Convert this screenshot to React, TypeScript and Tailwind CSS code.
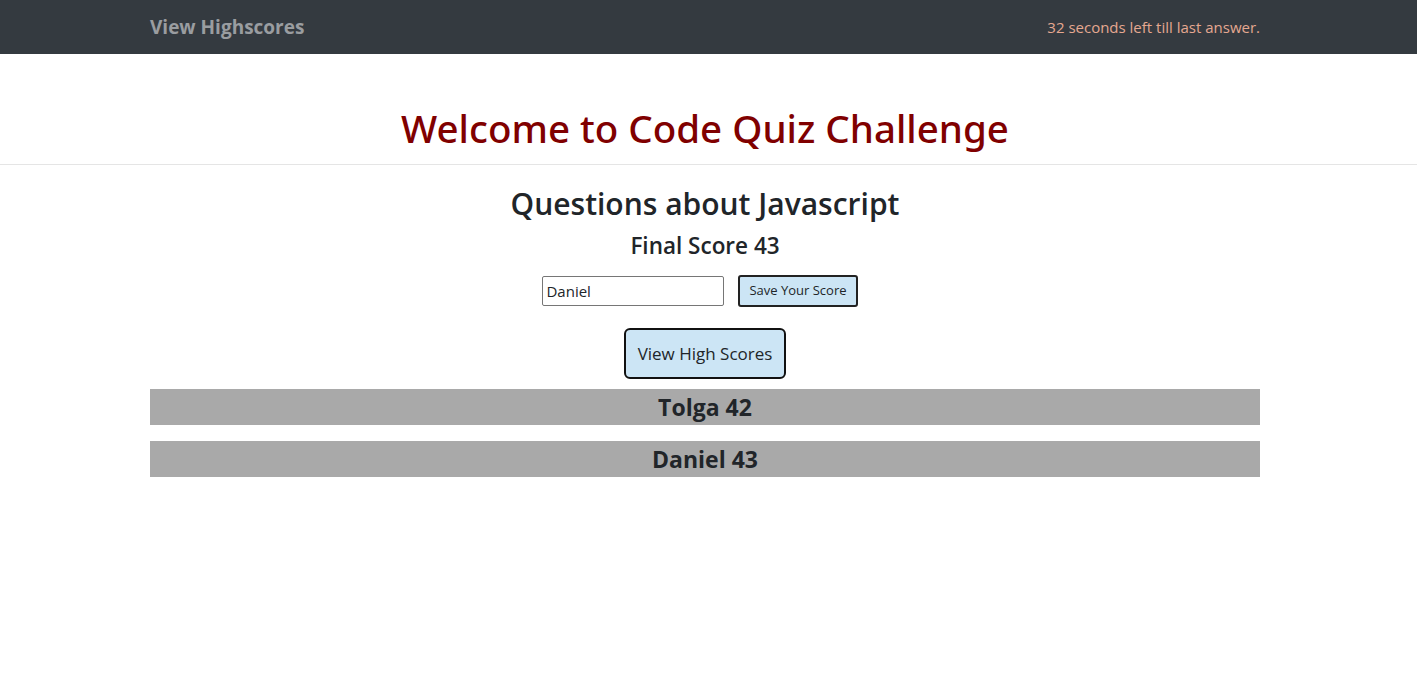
const scores = [
    { name: "Tolga", score: 42 },
    { name: "Daniel", score: 43 },
];

export default function App() {
    return (
        <div className="min-h-[682px] bg-white text-[#212529] font-['Open_Sans','Noto_Sans',sans-serif]">
            <nav className="h-[54px] bg-[#343a40]">
                <div className="w-[1110px] ml-[150px] h-full flex items-center justify-between">
                    <a className="text-[19px] font-bold text-[#9a9da0]">View Highscores</a>
                    <span className="text-[15px] text-[#e5a890]">32 seconds left till last answer.</span>
                </div>
            </nav>

            <header className="pt-[50px] pb-[12px] border-b border-[#e5e5e5]">
                <div className="w-[1110px] ml-[150px] text-center">
                    <h1 className="font-['Noto_Sans',sans-serif] text-[38.5px] leading-[48px] font-medium text-[#800000]">
                        Welcome to Code Quiz Challenge
                    </h1>
                </div>
            </header>

            <main className="w-[1110px] ml-[150px] flex flex-col items-center">
                <h2 className="mt-[20px] text-[30px] leading-[38px] font-semibold">Questions about Javascript</h2>
                <h4 className="mt-[8px] text-[22.5px] leading-[29px] font-semibold">Final Score 43</h4>
                <div className="mt-[15px] pr-[10px] flex items-center gap-[14px]">
                    <input
                        defaultValue="Daniel"
                        className="w-[182px] h-[30px] px-[3px] text-[15px] border border-[#767676] rounded-[2px]"
                    />
                    <button className="h-[32px] px-[9px] text-[13px] bg-[#cce5f5] border-2 border-[#222] rounded-[3px]">
                        Save Your Score
                    </button>
                </div>
                <button className="mt-[21px] w-[162px] h-[51px] text-[17px] bg-[#cce5f5] border-2 border-[#111] rounded-[6px]">
                    View High Scores
                </button>
                <div className="mt-[10px] w-full flex flex-col gap-[16px]">
                    {scores.map((s) => (
                        <div key={s.name} className="h-[36px] bg-[#a9a9a9] flex items-center justify-center">
                            <h3 className="text-[23px] font-bold">{s.name} {s.score}</h3>
                        </div>
                    ))}
                </div>
            </main>
        </div>
    );
}
